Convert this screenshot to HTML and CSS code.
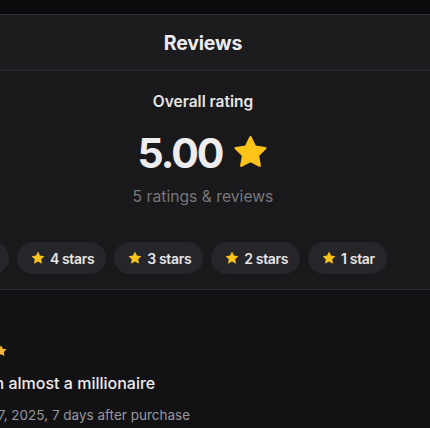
FILE: index.html
```html
<!DOCTYPE html>
<html>
<head>
<meta charset="utf-8">
<link rel="stylesheet" href="styles.css">
</head>
<body>
<div class="topband"></div>
<div class="panel">
  <header class="header"><h1 class="title">Reviews</h1></header>
  <section class="summary">
    <div class="label">Overall rating</div>
    <div class="score"><span>5.00</span>
      <svg class="bigstar" viewBox="0 0 24 24"><path d="M12 2.2l2.95 6.05 6.65.95-4.8 4.7 1.15 6.6L12 17.4l-5.95 3.1 1.15-6.6-4.8-4.7 6.65-.95z" fill="#fcc419" stroke="#fcc419" stroke-width="1.6" stroke-linejoin="round"/></svg>
    </div>
    <div class="count">5 ratings &amp; reviews</div>
    <div class="chips">
      <div class="chip"><svg class="cstar" viewBox="0 0 24 24"><path d="M12 2.2l2.95 6.05 6.65.95-4.8 4.7 1.15 6.6L12 17.4l-5.95 3.1 1.15-6.6-4.8-4.7 6.65-.95z"/></svg>5 stars</div>
      <div class="chip"><svg class="cstar" viewBox="0 0 24 24"><path d="M12 2.2l2.95 6.05 6.65.95-4.8 4.7 1.15 6.6L12 17.4l-5.95 3.1 1.15-6.6-4.8-4.7 6.65-.95z"/></svg>4 stars</div>
      <div class="chip"><svg class="cstar" viewBox="0 0 24 24"><path d="M12 2.2l2.95 6.05 6.65.95-4.8 4.7 1.15 6.6L12 17.4l-5.95 3.1 1.15-6.6-4.8-4.7 6.65-.95z"/></svg>3 stars</div>
      <div class="chip"><svg class="cstar" viewBox="0 0 24 24"><path d="M12 2.2l2.95 6.05 6.65.95-4.8 4.7 1.15 6.6L12 17.4l-5.95 3.1 1.15-6.6-4.8-4.7 6.65-.95z"/></svg>2 stars</div>
      <div class="chip"><svg class="cstar" viewBox="0 0 24 24"><path d="M12 2.2l2.95 6.05 6.65.95-4.8 4.7 1.15 6.6L12 17.4l-5.95 3.1 1.15-6.6-4.8-4.7 6.65-.95z"/></svg>1 star</div>
    </div>
  </section>
  <section class="review">
    <div class="rstars">
      <svg class="rstar" viewBox="0 0 24 24"><path d="M12 2.2l2.95 6.05 6.65.95-4.8 4.7 1.15 6.6L12 17.4l-5.95 3.1 1.15-6.6-4.8-4.7 6.65-.95z"/></svg>
      <svg class="rstar" viewBox="0 0 24 24"><path d="M12 2.2l2.95 6.05 6.65.95-4.8 4.7 1.15 6.6L12 17.4l-5.95 3.1 1.15-6.6-4.8-4.7 6.65-.95z"/></svg>
      <svg class="rstar" viewBox="0 0 24 24"><path d="M12 2.2l2.95 6.05 6.65.95-4.8 4.7 1.15 6.6L12 17.4l-5.95 3.1 1.15-6.6-4.8-4.7 6.65-.95z"/></svg>
      <svg class="rstar" viewBox="0 0 24 24"><path d="M12 2.2l2.95 6.05 6.65.95-4.8 4.7 1.15 6.6L12 17.4l-5.95 3.1 1.15-6.6-4.8-4.7 6.65-.95z"/></svg>
      <svg class="rstar" viewBox="0 0 24 24"><path d="M12 2.2l2.95 6.05 6.65.95-4.8 4.7 1.15 6.6L12 17.4l-5.95 3.1 1.15-6.6-4.8-4.7 6.65-.95z"/></svg>
    </div>
    <div class="rtitle">I've been almost a millionaire</div>
    <div class="rdate">January 27, 2025, 7 days after purchase</div>
  </section>
</div>
</body>
</html>
```
FILE: styles.css
```css
html, body {
  margin: 0;
  padding: 0;
  overflow: hidden;
  background: #0b0a0d;
  font-family: Inter, "Noto Sans", sans-serif;
}
.topband {
  height: 14px;
  background: #0b0a0d;
}
.panel {
  margin-left: -24px;
  width: 454px;
  background: #18171a;
  border-top: 1px solid #333236;
}
.header {
  height: 55px;
  display: flex;
  align-items: center;
  justify-content: center;
  background: #1c1b1e;
  border-bottom: 1px solid #2d2c30;
}
.title {
  margin: 0;
  font-size: 19.5px;
  font-weight: 700;
  color: #ececee;
  letter-spacing: -0.2px;
}
.summary {
  display: flex;
  flex-direction: column;
  align-items: center;
  padding-top: 21px;
  padding-bottom: 15px;
  border-bottom: 1px solid #2d2c30;
  background: #19181b;
}
.label {
  font-size: 15.5px;
  line-height: 20px;
  font-weight: 600;
  color: #e6e6e8;
}
.score {
  margin-top: 15px;
  display: flex;
  align-items: center;
  gap: 9px;
  font-size: 41px;
  line-height: 52px;
  font-weight: 700;
  color: #ededef;
  letter-spacing: -2px;
}
.bigstar {
  width: 37px;
  height: 37px;
  margin-top: -2px;
}
.count {
  margin-top: 7px;
  font-size: 15.7px;
  line-height: 22px;
  color: #78777b;
}
.chips {
  margin-top: 34px;
  align-self: flex-start;
  margin-left: -56px;
  display: flex;
  gap: 8px;
}
.chip {
  height: 32px;
  box-sizing: border-box;
  padding: 0 12px 0 13px;
  border-radius: 16px;
  background: #262529;
  display: flex;
  align-items: center;
  gap: 4px;
  font-size: 14px;
  font-weight: 600;
  letter-spacing: -0.35px;
  color: #e6e6e8;
  white-space: nowrap;
}
.cstar {
  width: 16px;
  height: 16px;
  fill: #fcc419;
}
.review {
  background: #121114;
  padding: 56px 0 20px 0;
  margin-left: -42px;
}
.rstars {
  display: flex;
  gap: 1px;
  height: 12px;
  margin-left: 0;
}
.rstar {
  width: 14px;
  height: 14px;
  fill: #f5b73a;
  margin-top: -2px;
}
.rtitle {
  margin-top: 14px;
  font-size: 16px;
  line-height: 22px;
  font-weight: 500;
  color: #ececee;
}
.rdate {
  margin-top: 11px;
  font-size: 13.5px;
  line-height: 20px;
  color: #98979b;
}
```
